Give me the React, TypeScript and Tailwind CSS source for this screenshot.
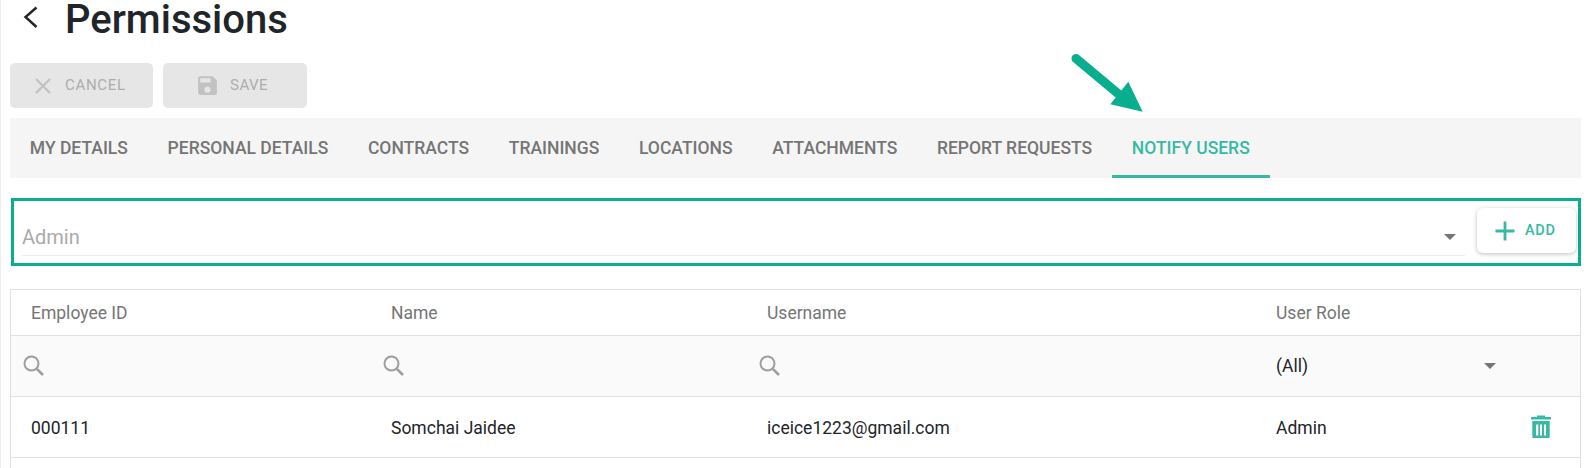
import React from 'react';

const tabs = ['My Details', 'Personal Details', 'Contracts', 'Trainings', 'Locations', 'Attachments', 'Report Requests', 'Notify Users'];

const SearchIcon = () => (
  <svg width="21" height="21" viewBox="0 0 21 21" fill="none" stroke="#9e9e9e" className="block">
    <circle cx="8.5" cy="8.5" r="7" strokeWidth="2" />
    <path d="M13.8 13.8 L20 20" strokeWidth="2.6" />
  </svg>
);

const Caret = () => <div className="w-0 h-0 border-x-[6px] border-x-transparent border-t-[6px] border-t-[#757575]" />;

export default function App() {
  return (
    <div className="relative h-[468px] overflow-hidden bg-white border-l border-[#eeeeee] pl-[9px] pr-[10px] font-['Roboto',sans-serif]">
      {/* callout arrow */}
      <svg className="absolute left-[1070px] top-[50px]" width="80" height="70" viewBox="0 0 80 70">
        <path d="M5 8.5 L47.5 44" stroke="#08ae8e" strokeWidth="9" strokeLinecap="round" />
        <polygon points="71.7,61.7 57.3,31.7 39.3,54.3" fill="#08ae8e" />
      </svg>

      <div className="h-[63px] flex items-start">
        <svg width="16" height="24" viewBox="0 0 16 24" fill="none" stroke="#212529" strokeWidth="2.4" className="ml-[13px] mt-[5px]">
          <path d="M13.5 2.5 L2.5 12 L13.5 22" />
        </svg>
        <h1 className="ml-[26px] text-[40px] leading-[40px] font-medium text-[#212529]">Permissions</h1>
      </div>

      <div className="flex gap-[10px] h-[45px]">
        <div className="w-[143px] rounded-[5px] bg-[#e6e6e6] flex items-center pl-[24px] gap-[12px]">
          <svg width="20" height="20" viewBox="0 0 20 20" stroke="#c2c2c2" strokeWidth="2.3" className="-ml-[1px]">
            <path d="M3 3 L17 17 M17 3 L3 17" />
          </svg>
          <span className="text-[15px] font-normal tracking-[0.7px] text-[#adadad]">CANCEL</span>
        </div>
        <div className="w-[144px] rounded-[5px] bg-[#e6e6e6] flex items-center pl-[33px] gap-[10px]">
          <svg width="25" height="25" viewBox="0 0 24 24" fill="#c2c2c2" className="-ml-[1px]">
            <path d="M17 3H5c-1.11 0-2 .9-2 2v14c0 1.1.89 2 2 2h14c1.1 0 2-.9 2-2V7l-4-4zm-5 16c-1.66 0-3-1.34-3-3s1.34-3 3-3 3 1.34 3 3-1.34 3-3 3zm3-10H5V5h10v4z" />
          </svg>
          <span className="text-[15px] font-normal tracking-[0.5px] text-[#adadad]">SAVE</span>
        </div>
      </div>

      <div className="mt-[10px] h-[60px] bg-[#f5f5f5] flex">
        {tabs.map((t, i) => {
          const active = i === tabs.length - 1;
          return (
            <div
              key={t}
              className={
                active
                  ? 'px-[19.85px] flex items-center uppercase text-[17.5px] font-medium text-[#38b9a4] border-b-[3px] border-[#38b9a4] pt-[3px]'
                  : 'px-[19.85px] flex items-center uppercase text-[17.5px] font-medium text-[#757575]'
              }
            >
              {t}
            </div>
          );
        })}
      </div>

      <div className="mt-[20px] h-[68px] ml-[1px] border-[3px] border-[#08ae8e] flex items-start pl-[8px] pr-[2px]">
        <div className="mt-[4px] flex-1 h-[51px] flex items-end border-b border-[#ececf2] pb-[4px] pr-[9px]">
          <span className="flex-1 text-[20px] leading-[28px] text-[#aaaaaa]">Admin</span>
          <div className="mb-[11px]"><Caret /></div>
        </div>
        <div className="mt-[7px] ml-[12px] w-[99px] h-[45px] rounded-[6px] bg-white shadow-[0_1px_4px_rgba(0,0,0,0.25)] flex items-center pl-[18px] gap-[10px]">
          <svg width="20" height="20" viewBox="0 0 20 20" stroke="#38b9a4" strokeWidth="2.8">
            <path d="M10 0.5 V19.5 M0.5 10 H19.5" />
          </svg>
          <span className="text-[14.5px] font-medium tracking-[0.7px] text-[#38b9a4]">ADD</span>
        </div>
      </div>

      <div className="mt-[23px] border border-[#e0e0e0] h-[200px]">
        <table className="w-full table-fixed border-collapse text-[17.5px]">
          <colgroup>
            <col className="w-[360px]" />
            <col className="w-[376px]" />
            <col className="w-[509px]" />
            <col className="w-[240px]" />
            <col />
          </colgroup>
          <thead>
            <tr className="h-[45px] border-b border-[#e0e0e0] text-left text-[#757575]">
              <th className="pl-[20px] pt-[1px] font-normal">Employee ID</th>
              <th className="pl-[20px] pt-[1px] font-normal">Name</th>
              <th className="pl-[20px] pt-[1px] font-normal">Username</th>
              <th className="pl-[20px] pt-[1px] font-normal">User Role</th>
              <th />
            </tr>
            <tr className="h-[61px] border-b border-[#e0e0e0] bg-[#fafafa]">
              <td className="pl-[12px]"><SearchIcon /></td>
              <td className="pl-[12px]"><SearchIcon /></td>
              <td className="pl-[12px]"><SearchIcon /></td>
              <td className="pl-[20px] text-[#212529]">
                <div className="flex items-center justify-between">
                  <span className="pt-[2px]">(All)</span>
                  <Caret />
                </div>
              </td>
              <td />
            </tr>
          </thead>
          <tbody>
            <tr className="h-[61px] border-b border-[#e0e0e0] text-[#212529]">
              <td className="pl-[20px] pt-[3px]">000111</td>
              <td className="pl-[20px] pt-[3px]">Somchai Jaidee</td>
              <td className="pl-[20px] pt-[3px]">iceice1223@gmail.com</td>
              <td className="pl-[20px] pt-[3px]">Admin</td>
              <td>
                <svg width="20" height="24" viewBox="0 0 20 24" className="block ml-[35px]">
                  <path d="M6 0.5 H14 V2 H20 V4.5 H0 V2 H6 Z" fill="#38b9a4" />
                  <path fillRule="evenodd" fill="#38b9a4" d="M1.3 6 H18.7 V22 Q18.7 23 17.7 23 H2.3 Q1.3 23 1.3 22 Z M5 9.5 V20.5 H7.3 V9.5 Z M9 9.5 V20.5 H11 V9.5 Z M13 9.5 V20.5 H15 V9.5 Z" />
                </svg>
              </td>
            </tr>
          </tbody>
        </table>
      </div>
    </div>
  );
}
